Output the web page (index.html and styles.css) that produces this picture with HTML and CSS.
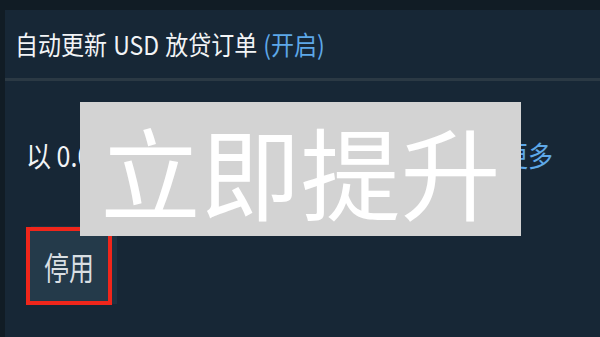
FILE: index.html
```html
<!DOCTYPE html>
<html lang="zh-CN">
<head>
    <meta charset="UTF-8">
    <meta name="viewport" content="width=device-width, initial-scale=1.0">
    <title>自动更新 USD 放贷订单</title>
    <link rel="stylesheet" href="styles.css">
</head>
<body>
    <div class="panel">
        <div class="panel-header">
            <span class="title">自动更新 USD 放贷订单 <span class="status">(开启)</span></span>
        </div>
        <div class="panel-body">
            <p class="rate-line">
                <span class="rate">以 0.02% 自动更新</span>
                <a class="more" href="#">了解更多</a>
            </p>
            <button type="button" class="stop-btn"><span class="btn-label">停用</span></button>
        </div>
    </div>

    <div class="promo">立即提升</div>
</body>
</html>
```

FILE: styles.css
```css
/* Фон страницы и шрифты */
body {
    margin: 0;
    height: 337px;
    overflow: hidden;
    background-color: #111c25;
    font-family: "Noto Sans CJK SC", "Noto Sans", sans-serif;
    color: #f2f4f6;
}

/* Панель */
.panel {
    margin: 10px 0 0 5px;
    height: 327px;
    background-color: #172736;
}

.panel-header {
    height: 68px;
    display: flex;
    align-items: center;
    padding-left: 10px;
    border-bottom: 3px solid #2b3944;
    font-size: 23px;
}

/* текст на скриншоте немного вытянут по вертикали */
.title {
    display: inline-block;
    transform: scaleY(1.12);
    word-spacing: 1px;
}

.status {
    color: #5ea8e8;
}

.panel-body {
    padding: 57px 0 0 21px;
}

.rate-line {
    margin: 0;
    display: flex;
    justify-content: space-between;
    padding-right: 47px;
    font-size: 25px;
    line-height: 32px;
}

.rate, .more {
    display: inline-block;
    transform: scaleY(1.15);
}

.more {
    color: #5ea8e8;
    text-decoration: none;
}

/* Кнопка */
.stop-btn {
    margin-top: 57px;
    width: 86px;
    height: 78px;
    padding: 0;
    background-color: #243a4a;
    border: 4px solid #f0261b;
    box-shadow: 5px -1px 0 #1e3242;
    font-family: inherit;
    font-size: 25px;
    color: #d9dfe3;
    cursor: pointer;
}

.btn-label {
    display: inline-block;
    transform: scaleY(1.28);
}

/* Плашка поверх */
.promo {
    position: absolute;
    left: 80px;
    top: 102px;
    width: 441px;
    height: 134px;
    display: flex;
    align-items: center;
    justify-content: center;
    background-color: #d3d3d3;
    font-size: 100px;
    color: #ffffff;
}
```
